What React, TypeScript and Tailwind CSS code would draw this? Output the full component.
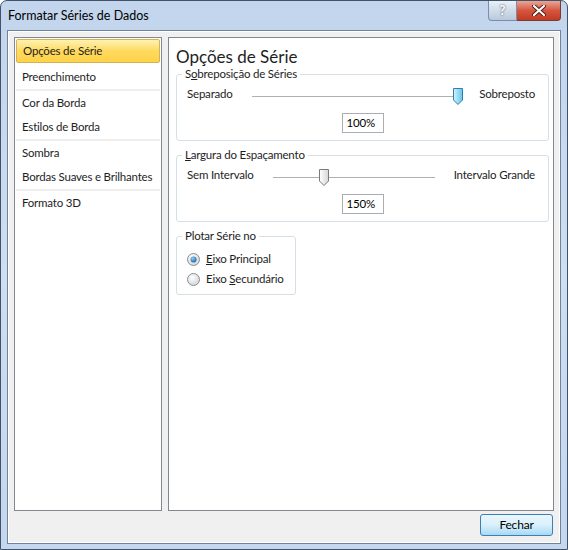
import React from "react";

const font = { fontFamily: 'Lato, "Open Sans", sans-serif' };

const Thumb = ({ active }: { active?: boolean }) => (
    <svg width="12" height="19" viewBox="0 0 12 19" className="absolute top-[-9px]">
        <defs>
            <linearGradient id={active ? "tb" : "tg"} x1="0" y1="0" x2="1" y2="0">
                <stop offset="0" stopColor={active ? "#d4f1fc" : "#ffffff"} />
                <stop offset="1" stopColor={active ? "#62c7ef" : "#d6d6d6"} />
            </linearGradient>
        </defs>
        <path d="M1.5 1.5 H10.5 V13 L6 17.5 L1.5 13 Z" fill={`url(#${active ? "tb" : "tg"})`} stroke={active ? "#2f7fb3" : "#7a7a7a"} strokeLinejoin="round" />
    </svg>
);

const Slider = ({ width, pos, active }: { width: number; pos: number; active?: boolean }) => (
    <div className="relative h-[2px] mt-[6px] bg-[#b0b0b0] border-b border-white" style={{ width }}>
        <div className="absolute" style={{ left: pos }}>
            <Thumb active={active} />
        </div>
    </div>
);

const Radio = ({ checked }: { checked?: boolean }) => (
    <svg width="13" height="13" viewBox="0 0 13 13" className="shrink-0">
        <defs>
            <radialGradient id="rg" cx="0.4" cy="0.35" r="0.7">
                <stop offset="0" stopColor="#ffffff" />
                <stop offset="1" stopColor="#cfd3d8" />
            </radialGradient>
            <radialGradient id="rd" cx="0.4" cy="0.35" r="0.7">
                <stop offset="0" stopColor="#8fd0f7" />
                <stop offset="1" stopColor="#155fa0" />
            </radialGradient>
        </defs>
        <circle cx="6.5" cy="6.5" r="6" fill="url(#rg)" stroke="#8f8f8f" />
        {checked && <circle cx="6.5" cy="6.5" r="3" fill="url(#rd)" />}
    </svg>
);

const NumBox = ({ value }: { value: string }) => (
    <div className="w-[42px] h-[20px] bg-white border border-[#abadb3] flex items-center pl-[4px] text-black">{value}</div>
);

const Group = ({ title, className, children }: { title: React.ReactNode; className?: string; children: React.ReactNode }) => (
    <fieldset className={"border border-[#d5dfe5] rounded-[3px] " + (className ?? "")}>
        <legend className="ml-[5px] px-[3px] text-[#1e1e1e] leading-[14px] whitespace-nowrap">{title}</legend>
        {children}
    </fieldset>
);

const menu = [
    ["Opções de Série"],
    ["Preenchimento"],
    ["Cor da Borda", "Estilos de Borda"],
    ["Sombra", "Bordas Suaves e Brilhantes"],
    ["Formato 3D"],
];

export default function App() {
    return (
        <div className="w-[568px] h-[550px] flex flex-col rounded-t-[7px] border border-[#40536b] bg-gradient-to-b from-[#c2d5ec] via-[#cfdef0] to-[#c4d7ee] text-[11.5px] tracking-[-0.2px] text-[#1e1e1e]" style={font}>
            <div className="h-[29px] flex items-start shrink-0">
                <div className="pl-[7px] pt-[6px] text-[12.5px] tracking-normal text-black">Formatar Séries de Dados</div>
                <div className="ml-auto mr-[6px] flex">
                    <div className="w-[29px] h-[20px] border border-[#7a8ea8] border-t-0 rounded-bl-[4px] bg-gradient-to-b from-[#e9f0f8] to-[#b9c9dc] flex items-center justify-center text-[13px] text-white font-bold" style={{ textShadow: "0 0 2px #333" }}>?</div>
                    <div className="w-[44px] h-[20px] border border-[#7a3b32] border-t-0 border-l-0 rounded-br-[4px] bg-gradient-to-b from-[#e8a597] via-[#d5553f] to-[#c23b22] flex items-center justify-center">
                        <svg width="14" height="11" viewBox="0 0 14 11">
                            <path d="M2 1 L12 10 M12 1 L2 10" stroke="#4a1a12" strokeWidth="4" strokeLinecap="round" />
                            <path d="M2 1 L12 10 M12 1 L2 10" stroke="#ffffff" strokeWidth="2.2" strokeLinecap="round" />
                        </svg>
                    </div>
                </div>
            </div>
            <div className="mx-[6px] mb-[6px] flex-1 border border-[#6f839c] flex flex-col bg-[#f0f0f0]">
                <div className="flex-1 border border-white flex flex-col pl-[5px] pr-[5px] pt-[5px] pb-[6px]">
                    <div className="flex gap-[6px] h-[474px]">
                        <div className="w-[148px] bg-white border border-[#828790] p-[1px] flex flex-col">
                            {menu.map((grp, gi) => (
                                <div key={gi} className={gi < menu.length - 1 && gi > 0 ? "border-b-2 border-[#eeeeee]" : ""}>
                                    {grp.map((item) => (
                                        <div
                                            key={item}
                                            className={
                                                "h-[24px] flex items-center pl-[6px] whitespace-nowrap " +
                                                (item === "Opções de Série"
                                                    ? "bg-gradient-to-b from-[#fff2b0] via-[#ffd95e] to-[#ffd346] border border-[#d2b35a] rounded-[2px] mb-[2px]"
                                                    : "")
                                            }
                                        >
                                            {item}
                                        </div>
                                    ))}
                                </div>
                            ))}
                        </div>
                        <div className="w-[386px] bg-white border border-[#828790] px-[7px] pt-[9px] flex flex-col">
                            <div className="text-[17px] tracking-normal leading-[20px] text-[#1e1e1e]">Opções de Série</div>
                            <Group title={<><span>S</span><span className="underline">o</span>breposição de Séries</>} className="h-[74px] w-[373px]">
                                <div className="flex items-center pl-[10px] pr-[13px] mt-[3px] h-[20px]">
                                    <span className="w-[65px]">Separado</span>
                                    <Slider width={203} pos={200} active />
                                    <span className="ml-auto">Sobreposto</span>
                                </div>
                                <div className="flex justify-center mt-[9px]">
                                    <NumBox value="100%" />
                                </div>
                            </Group>
                            <Group title={<><span className="underline">L</span>argura do Espaçamento</>} className="h-[74px] w-[373px] mt-[7px]">
                                <div className="flex items-center pl-[10px] pr-[13px] mt-[3px] h-[20px]">
                                    <span className="w-[86px]">Sem Intervalo</span>
                                    <Slider width={162} pos={45} />
                                    <span className="ml-auto">Intervalo Grande</span>
                                </div>
                                <div className="flex justify-center mt-[9px]">
                                    <NumBox value="150%" />
                                </div>
                            </Group>
                            <Group title="Plotar Série no" className="w-[120px] h-[66px] mt-[7px]">
                                <div className="flex flex-col pl-[10px] mt-[7px] gap-[2px]">
                                    <div className="flex items-center gap-[6px] h-[18px] whitespace-nowrap">
                                        <Radio checked />
                                        <span><span className="underline">E</span>ixo Principal</span>
                                    </div>
                                    <div className="flex items-center gap-[6px] h-[18px] whitespace-nowrap">
                                        <Radio />
                                        <span>Eixo <span className="underline">S</span>ecundário</span>
                                    </div>
                                </div>
                            </Group>
                        </div>
                    </div>
                    <div className="flex justify-end pt-[3px] pr-[1px]">
                        <button className="w-[73px] h-[22px] rounded-[3px] border border-[#3c7fb1] bg-gradient-to-b from-[#eaf6fd] via-[#d9f0fc] to-[#a7d9f5] text-[12px] text-black" style={font}>
                            Fechar
                        </button>
                    </div>
                </div>
            </div>
        </div>
    );
}
